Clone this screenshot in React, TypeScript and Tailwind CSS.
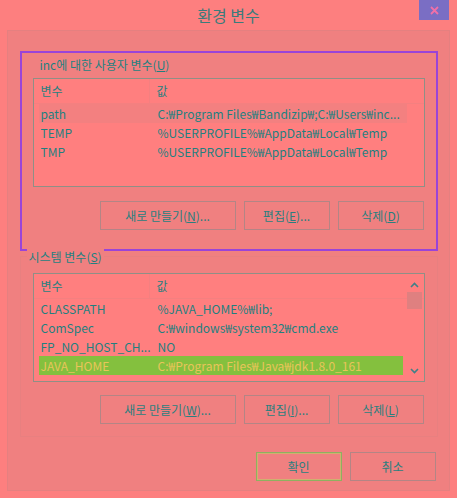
import React from 'react';

type Row = { name: string; value: string; hover?: boolean; selected?: boolean };

const userVars: Row[] = [
  { name: 'path', value: 'C:₩Program Files₩Bandizip₩;C:₩Users₩inc...', hover: true },
  { name: 'TEMP', value: '%USERPROFILE%₩AppData₩Local₩Temp' },
  { name: 'TMP', value: '%USERPROFILE%₩AppData₩Local₩Temp' },
];

const sysVars: Row[] = [
  { name: 'CLASSPATH', value: '%JAVA_HOME%₩lib;' },
  { name: 'ComSpec', value: 'C:₩windows₩system32₩cmd.exe' },
  { name: 'FP_NO_HOST_CH...', value: 'NO' },
  { name: 'JAVA_HOME', value: 'C:₩Program Files₩Java₩jdk1.8.0_161', selected: true },
];

const Btn: React.FC<{ children: React.ReactNode; w: string; ok?: boolean }> = ({ children, w, ok }) => (
  <div
    className={`${w} h-[29px] flex items-center justify-center text-[12px] text-[#2a7f7f] bg-[#f08080] border ${
      ok ? 'border-[#8fb060] outline outline-1 -outline-offset-2 outline-[#d0b070]' : 'border-[#b38585]'
    }`}
  >
    {children}
  </div>
);

const ListBox: React.FC<{ rows: Row[]; scroll?: boolean }> = ({ rows, scroll }) => (
  <div className="relative w-[392px] h-[109px] border border-[#8f8f86] bg-[#ff7f7f] flex flex-col">
    <div className="h-[25px] flex items-center text-[12px] text-[#2a7f7f] border-b border-[#f48080]">
      <div className="w-[116px] pl-[7px] border-r border-[#f48080] h-full flex items-center">변수</div>
      <div className="pl-[7px]">값</div>
    </div>
    {rows.map((r) => (
      <div
        key={r.name}
        className={`h-[19px] mx-[5px] flex items-center text-[12px] whitespace-nowrap ${
          scroll ? 'w-[364px]' : 'w-[368px]'
        } ${r.selected ? 'bg-[#84c03e] text-[#e8c45a]' : r.hover ? 'bg-[#f38080] text-[#1f8080]' : 'text-[#1f8080]'}`}
      >
        <div className="w-[118px] pl-[2px] overflow-hidden">{r.name}</div>
        <div className="pl-[1px]">{r.value}</div>
      </div>
    ))}
    {scroll && (
      <div className="absolute right-[2px] top-[1px] bottom-[1px] w-[15px] flex flex-col items-center">
        <svg width="9" height="6" viewBox="0 0 9 6" className="mt-[7px]">
          <path d="M1 5 L4.5 1.5 L8 5" stroke="#3f8088" strokeWidth="1.6" fill="none" />
        </svg>
        <div className="mt-[4px] w-[15px] h-[17px] bg-[#df8080]" />
        <div className="flex-1" />
        <svg width="9" height="6" viewBox="0 0 9 6" className="mb-[6px]">
          <path d="M1 1 L4.5 4.5 L8 1" stroke="#3f8088" strokeWidth="1.6" fill="none" />
        </svg>
      </div>
    )}
  </div>
);

const App: React.FC = () => {
  return (
    <div
      className="w-[457px] h-[498px] bg-[#fd7f7f] flex flex-col"
      style={{ fontFamily: '"Noto Sans CJK KR", "Noto Sans", sans-serif' }}
    >
      <header className="relative h-[30px] flex items-center justify-center">
        <span className="text-[16px] text-[#3b7b7b]">환경 변수</span>
        <div className="absolute top-0 right-[8px] w-[30px] h-[20px] bg-[#7a6ec4] flex items-center justify-center">
          <svg width="9" height="9" viewBox="0 0 9 9">
            <path d="M1 1 L8 8 M8 1 L1 8" stroke="#f070a8" strokeWidth="1.8" />
          </svg>
        </div>
      </header>

      <main className="mx-[7px] h-[461px] border border-[#e58080] bg-[#f08080] flex flex-col items-center">
        <section className="mt-[20px] w-[418px] h-[200px] border-2 border-[#9a44d8] flex flex-col pl-[11px]">
          <div className="h-[25px] pl-[7px] pt-[2px] text-[12px] text-[#1f8080] leading-[20px]">
            inc에 대한 사용자 변수(<span className="underline">U</span>)
          </div>
          <ListBox rows={userVars} />
          <div className="mt-[14px] w-[392px] flex justify-end gap-[8px] pr-[1px]">
            <Btn w="w-[136px]">
              새로 만들기(<span className="underline">N</span>)...
            </Btn>
            <Btn w="w-[86px]">
              편집(<span className="underline">E</span>)...
            </Btn>
            <Btn w="w-[86px]">
              삭제(<span className="underline">D</span>)
            </Btn>
          </div>
        </section>

        <section className="mt-[5px] w-[418px] h-[181px] border border-[#e88080] flex flex-col pl-[12px] relative">
          <div className="absolute left-[6px] top-[-9px] px-[2px] bg-[#f08080] text-[12px] text-[#1f8080] leading-[18px]">
            시스템 변수(<span className="underline">S</span>)
          </div>
          <div className="mt-[16px]">
            <ListBox rows={sysVars} scroll />
          </div>
          <div className="mt-[13px] w-[392px] flex justify-end gap-[8px] pr-[1px]">
            <Btn w="w-[136px]">
              새로 만들기(<span className="underline">W</span>)...
            </Btn>
            <Btn w="w-[86px]">
              편집(<span className="underline">I</span>)...
            </Btn>
            <Btn w="w-[86px]">
              삭제(<span className="underline">L</span>)
            </Btn>
          </div>
        </section>

        <div className="mt-[15px] w-[428px] flex justify-end gap-[8px] pr-[7px]">
          <Btn w="w-[86px]" ok>
            확인
          </Btn>
          <Btn w="w-[86px]">취소</Btn>
        </div>
      </main>
    </div>
  );
};

export default App;
